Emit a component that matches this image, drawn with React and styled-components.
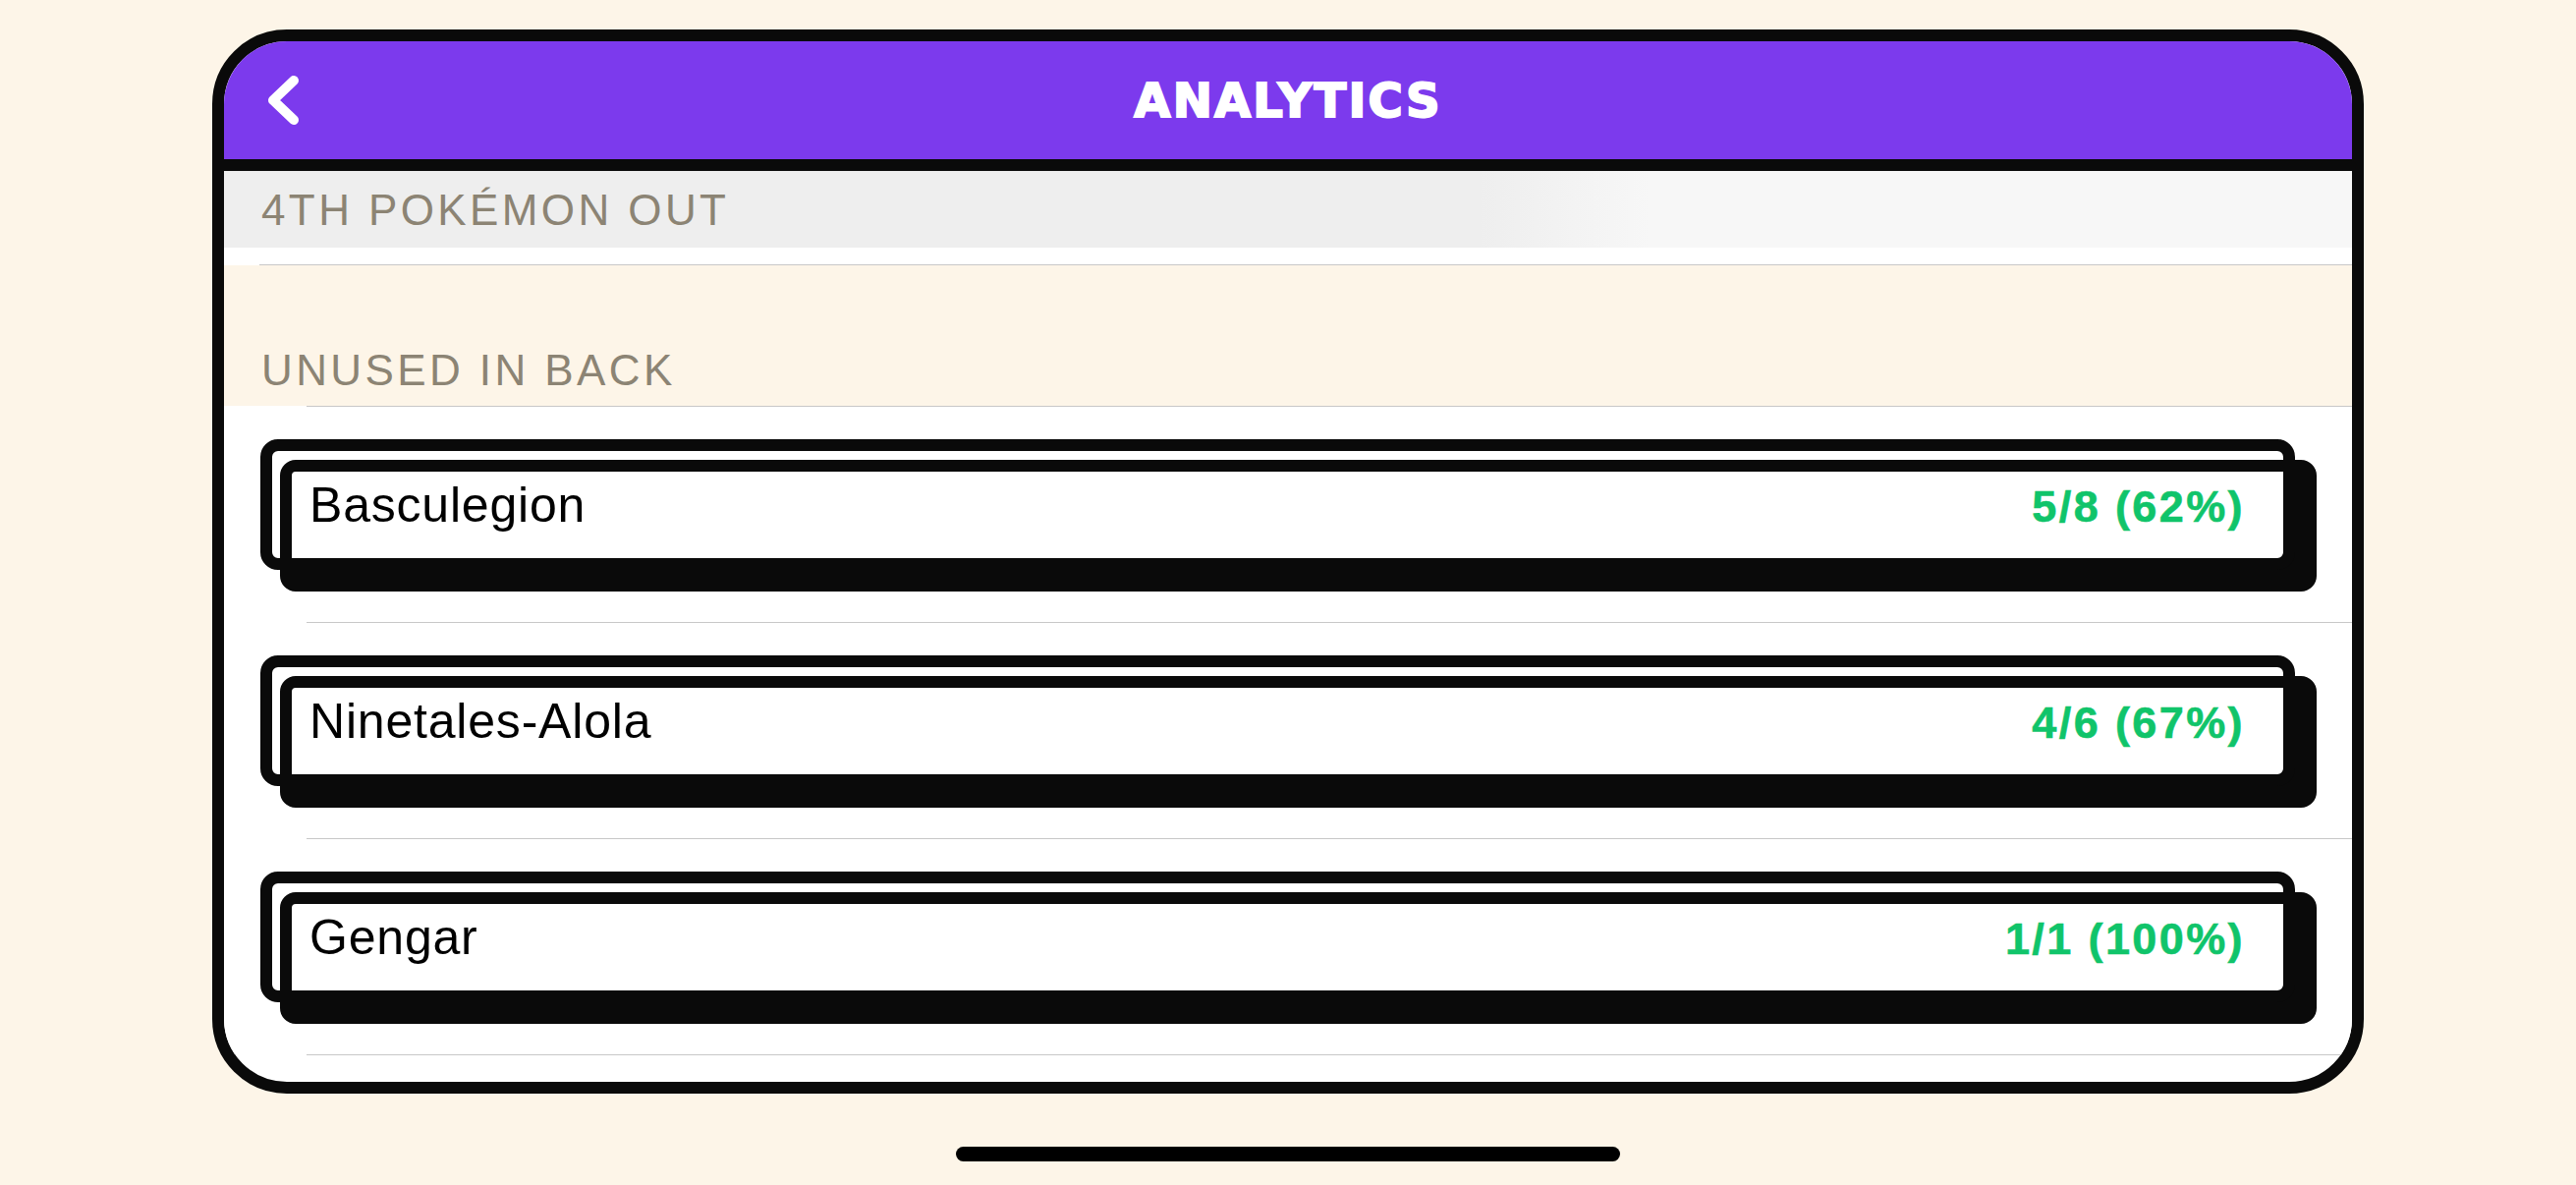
import React from 'react';
import styled, { createGlobalStyle } from 'styled-components';

const unusedInBack = [
  { name: 'Basculegion', stat: '5/8 (62%)' },
  { name: 'Ninetales-Alola', stat: '4/6 (67%)' },
  { name: 'Gengar', stat: '1/1 (100%)' },
];

const GlobalStyle = createGlobalStyle`
  html, body {
    margin: 0;
    padding: 0;
    background: #fdf5e8;
  }
  body {
    font-family: "Liberation Sans", Arial, sans-serif;
  }
`;

/**
 * Analytics screen: purple nav bar, grouped sections and stacked stat cards
 */
const App = () => {
  return (
    <Page>
      <GlobalStyle />
      <Frame>
        <NavBar>
          <BackButton aria-label="Back">
            <svg width="40" height="56" viewBox="0 0 40 56" fill="none">
              <path
                d="M31 8 L10 28 L31 48"
                stroke="#fff"
                strokeWidth="10"
                strokeLinecap="round"
                strokeLinejoin="round"
              />
            </svg>
          </BackButton>
          <Title>ANALYTICS</Title>
          <span />
        </NavBar>

        <SectionHeader $variant="sticky">4TH POKÉMON OUT</SectionHeader>
        <EmptyRow />
        <Divider $inset={36} />

        <SectionHeader $variant="plain">UNUSED IN BACK</SectionHeader>
        <Divider $inset={84} />

        {unusedInBack.map((item) => (
          <React.Fragment key={item.name}>
            <Row>
              <CardStack>
                <Card>
                  <PokemonName>{item.name}</PokemonName>
                  <Stat>{item.stat}</Stat>
                </Card>
              </CardStack>
            </Row>
            <Divider $inset={84} />
          </React.Fragment>
        ))}
      </Frame>
      <HomeIndicator />
    </Page>
  );
};

export default App;

const Page = styled.div`
  min-height: 100vh;
  box-sizing: border-box;
  padding-top: 30px;
  display: flex;
  flex-direction: column;
  align-items: center;
`;

const Frame = styled.div`
  width: 2190px;
  height: 1083px;
  box-sizing: border-box;
  border: 12px solid #0a0a0a;
  border-radius: 76px;
  background: #ffffff;
  overflow: hidden;
  display: flex;
  flex-direction: column;
`;

const NavBar = styled.header`
  height: 120px;
  flex-shrink: 0;
  background: #7c3aed;
  border-bottom: 12px solid #0a0a0a;
  display: grid;
  grid-template-columns: 1fr auto 1fr;
  align-items: center;
`;

const BackButton = styled.button`
  justify-self: start;
  margin-left: 40px;
  padding: 0;
  border: none;
  background: transparent;
  display: flex;
  cursor: pointer;
`;

const Title = styled.h1`
  margin: 0;
  color: #ffffff;
  font-family: "DejaVu Sans", "Liberation Sans", sans-serif;
  font-weight: 700;
  font-size: 48px;
  letter-spacing: 2.2px;
  line-height: 1;
  -webkit-text-stroke: 2px #ffffff;
`;

const SectionHeader = styled.div`
  flex-shrink: 0;
  font-size: 44px;
  line-height: 50px;
  letter-spacing: 3.4px;
  color: #8c8474;
  padding: ${({ $variant }) => ($variant === 'sticky' ? '15px 0 13px 38px' : '82px 0 11px 38px')};
  background: ${({ $variant }) =>
    $variant === 'sticky'
      ? 'linear-gradient(90deg, #eeeeee 0%, #eeeeee 59%, #f7f7f7 67%, #f7f7f7 100%)'
      : '#fdf5e8'};
`;

const EmptyRow = styled.div`
  height: 17px;
  flex-shrink: 0;
  background: #ffffff;
`;

const Divider = styled.div`
  height: 1px;
  flex-shrink: 0;
  margin-left: ${({ $inset }) => $inset}px;
  background: #c8c8c8;
`;

const Row = styled.div`
  flex-shrink: 0;
  padding: 33px 36px 31px 37px;
  background: #ffffff;
`;

const CardStack = styled.div`
  position: relative;
  padding: 21px 0 0 20px;

  &::before {
    content: '';
    position: absolute;
    top: 0;
    left: 0;
    right: 22px;
    bottom: 22px;
    border: 12px solid #0a0a0a;
    border-radius: 18px;
    z-index: 1;
    pointer-events: none;
  }
`;

const Card = styled.div`
  height: 134px;
  box-sizing: border-box;
  border-style: solid;
  border-color: #0a0a0a;
  border-width: 12px 33px 34px 12px;
  border-radius: 16px;
  background: #ffffff;
  padding: 5px 40px 0 18px;
  display: flex;
  justify-content: space-between;
  align-items: baseline;
`;

const PokemonName = styled.span`
  font-size: 50px;
  letter-spacing: 0.8px;
  color: #000000;
`;

const Stat = styled.span`
  font-size: 45px;
  font-weight: 700;
  letter-spacing: 2.4px;
  color: #10c46a;
  -webkit-text-stroke: 0.6px #10c46a;
`;

const HomeIndicator = styled.div`
  margin-top: 54px;
  width: 676px;
  height: 15px;
  border-radius: 8px;
  background: #000000;
`;
